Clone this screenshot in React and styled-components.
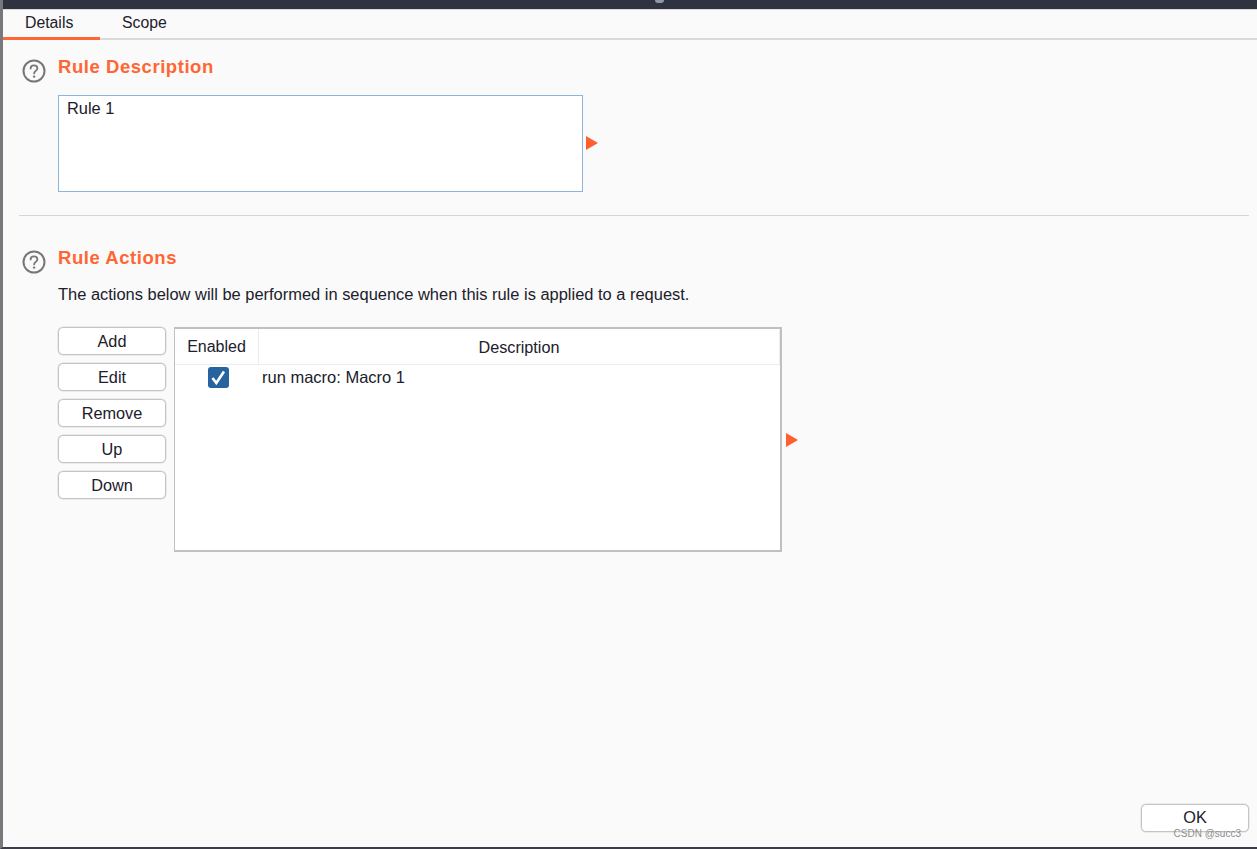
import React from "react";
import styled, { createGlobalStyle } from "styled-components";

const Global = createGlobalStyle`
  html, body { margin: 0; padding: 0; background: #fafafa; }
  body { font-family: "Liberation Sans", Arial, sans-serif; color: #1e1e28; }
`;

const Window = styled.div`
  width: 1257px; height: 849px; box-sizing: border-box; position: relative; overflow: hidden;
  background: #fafafa;
  border-left: 3px solid #77777c;
  border-bottom: 2px solid #3a3d48;
  display: flex; flex-direction: column;
`;
const TitleBar = styled.div`
  height: 9px; flex: none; margin-left: -3px; background: #2f3340; position: relative;
`;
const TitleGlyph = styled.span`
  position: absolute; left: 655px; top: 0; width: 9px; height: 3px;
  background: #8f98a8; border-radius: 0 0 4px 4px;
`;
const Tabs = styled.div`
  height: 31px; flex: none; box-sizing: border-box; display: flex;
  border-top: 1px solid #d8d8d8;
  border-bottom: 2px solid #d9dbd9;
`;
const Tab = styled.div`
  width: ${p => p.$w}px; box-sizing: border-box; height: 30px;
  padding-left: ${p => p.$pad}px; padding-top: 4px;
  font-size: 15.8px; line-height: 18px; color: #20202c;
  border-bottom: ${p => (p.$active ? "3px solid #ff6633" : "none")};
`;
const Content = styled.div`
  flex: 1; display: flex; flex-direction: column; min-height: 0;
`;
const Section = styled.section`
  display: grid; grid-template-columns: 36px 1fr; padding-left: 19px;
  margin-top: ${p => p.$top}px;
`;
const HelpIcon = styled.svg`
  width: 24px; height: 24px; display: block; margin-top: 2px;
`;
const Heading = styled.h2`
  margin: -1px 0 0; font-size: 18.5px; line-height: 22px; font-weight: 700; color: #ff6633;
  letter-spacing: 0.55px;
`;
const DescRow = styled.div`
  display: flex; align-items: center; margin-top: 17px; gap: 3px;
`;
const TextBox = styled.div`
  width: 525px; height: 97px; box-sizing: border-box; background: #fff;
  border: 1px solid #8fb4dc; padding: 3px 8px;
  font-size: 16.4px; line-height: 18px; color: #20202c;
`;
const Arrow = styled.span`
  display: block; width: 0; height: 0; flex: none;
  border-left: 12px solid #ff5f2e; border-top: 7px solid transparent; border-bottom: 7px solid transparent;
  margin-top: ${p => p.$top || 0}px; margin-left: ${p => p.$left || 0}px;
`;
const Divider = styled.hr`
  margin: 23px 8px 0 16px; border: 0; height: 1px; background: #d6d6d6;
`;
const Hint = styled.p`
  margin: 16px 0 0; font-size: 16.45px; line-height: 18px; color: #20202c; white-space: nowrap;
`;
const ActionRow = styled.div`
  display: flex; align-items: flex-start; margin-top: 24px;
`;
const ButtonCol = styled.div`
  display: flex; flex-direction: column; gap: 8px; width: 108px; flex: none; margin-right: 8px;
`;
const Button = styled.button`
  width: 108px; height: 28px; box-sizing: border-box; padding: 0 0 ${p => (p.$lift ? 2 : 0)}px; background: #fff;
  border: 1px solid #c4c4c4; border-radius: 5px; box-shadow: 0 0 0 0.5px #dcdcdc;
  font-family: inherit; font-size: 16.3px; line-height: 24px; color: #20202c;
`;
const TableWrap = styled.div`
  width: 608px; height: 225px; box-sizing: border-box; background: #fff;
  border: 2px solid #c0c0c0; border-width: 2px 2px 2px 1px;
`;
const HeaderRow = styled.div`
  display: flex; height: 36px; box-sizing: border-box; border-bottom: 1px solid #ececec;
`;
const HeadCell = styled.div`
  width: ${p => p.$w}; flex: ${p => (p.$grow ? 1 : "none")}; box-sizing: border-box;
  display: flex; align-items: center; justify-content: center; padding-top: 1px;
  font-size: ${p => p.$size}px; color: #20202c;
  border-right: 1px solid #ececec;
  background: #fff;
`;
const Row = styled.div`
  display: flex; align-items: center; height: 24px;
`;
const CheckCell = styled.div`
  width: 84px; flex: none; display: flex; justify-content: center; padding-left: 2px; box-sizing: border-box;
`;
const CheckBox = styled.span`
  width: 21px; height: 21px; border-radius: 3px; background: #27639e; display: flex; align-items: center; justify-content: center;
`;
const CellText = styled.div`
  padding-left: 3px; font-size: 16.5px; color: #20202c;
`;
const Footer = styled.div`
  margin-top: auto; display: flex; justify-content: flex-end; padding: 0 8px 15px 0;
`;
const Watermark = styled.span`
  position: absolute; right: 16px; bottom: 7px; font-size: 10px; line-height: 12px; color: #8d8d8d;
`;

const Help = () => (
  <HelpIcon viewBox="0 0 24 24" fill="none" aria-hidden="true">
    <circle cx="12" cy="12" r="10.5" stroke="#77777a" strokeWidth="2" />
    <path d="M8.6 9.6c0-2 1.5-3.2 3.4-3.2s3.4 1.2 3.4 3c0 2.4-3.3 2.5-3.3 5" stroke="#77777a" strokeWidth="1.8" strokeLinecap="round" />
    <circle cx="12.1" cy="17.6" r="1.2" fill="#77777a" />
  </HelpIcon>
);

const actions = ["Add", "Edit", "Remove", "Up", "Down"];

export default function App() {
  return (
    <>
      <Global />
      <Window>
        <TitleBar><TitleGlyph /></TitleBar>
        <Tabs>
          <Tab $active $w={97} $pad={22}>Details</Tab>
          <Tab $w={120} $pad={22}>Scope</Tab>
        </Tabs>
        <Content>
          <Section $top={17}>
            <Help />
            <div>
              <Heading>Rule Description</Heading>
              <DescRow>
                <TextBox>Rule 1</TextBox>
                <Arrow $top={-2} />
              </DescRow>
            </div>
          </Section>
          <Divider />
          <Section $top={32}>
            <Help />
            <div>
              <Heading>Rule Actions</Heading>
              <Hint>The actions below will be performed in sequence when this rule is applied to a request.</Hint>
              <ActionRow>
                <ButtonCol>
                  {actions.map(a => <Button key={a}>{a}</Button>)}
                </ButtonCol>
                <TableWrap>
                  <HeaderRow>
                    <HeadCell $w="84px" $size={16}>Enabled</HeadCell>
                    <HeadCell $grow $size={16.2}>Description</HeadCell>
                  </HeaderRow>
                  <Row>
                    <CheckCell>
                      <CheckBox>
                        <svg width="17" height="17" viewBox="0 0 17 17" fill="none" aria-hidden="true">
                          <path d="M2.5 9l3.8 5L14 2.5" stroke="#fff" strokeWidth="2.6" />
                        </svg>
                      </CheckBox>
                    </CheckCell>
                    <CellText>run macro: Macro 1</CellText>
                  </Row>
                </TableWrap>
                <Arrow $top={106} $left={4} />
              </ActionRow>
            </div>
          </Section>
          <Footer>
            <Button $lift>OK</Button>
          </Footer>
        </Content>
        <Watermark>CSDN @succ3</Watermark>
      </Window>
    </>
  );
}
